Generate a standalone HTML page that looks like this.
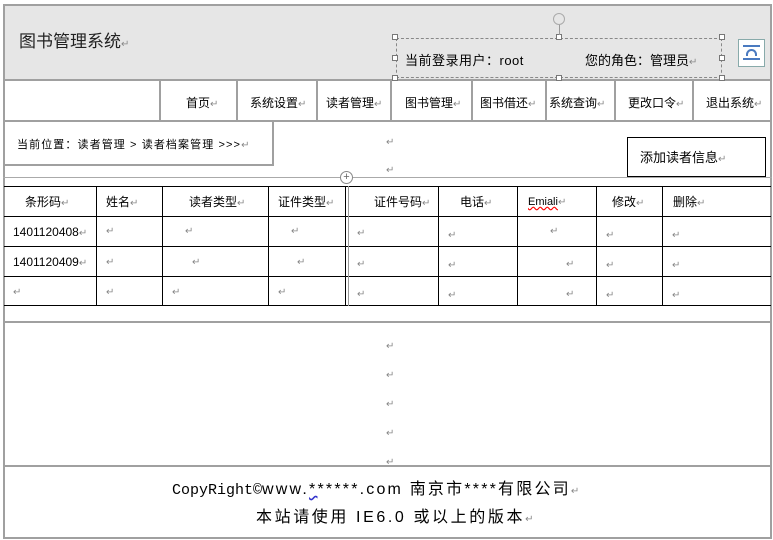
<!DOCTYPE html>
<html><head><meta charset="utf-8"><style>
body{margin:0;width:773px;height:540px;background:#fff;position:relative;overflow:hidden;font-family:"Liberation Sans","Noto Sans CJK SC",sans-serif;font-size:12px;color:#000}
div{position:absolute;box-sizing:border-box}
.g{border:2px solid #a0a0a0}
.k{border:1px solid #000}
.t{white-space:nowrap;line-height:14px}
.m{color:#888;font-size:10px}
.hl{height:2px;background:#a0a0a0}
.bl{height:1px;background:#000}
.vl{width:1px;background:#000}
</style></head><body>
<div class="g" style="left:3px;top:4px;width:769px;height:535px"></div>
<div style="left:5px;top:6px;width:765px;height:74px;background:#e6e6e6"></div>
<div class="hl" style="left:3px;top:79px;width:769px"></div>
<div class="t" style="left:19px;top:33px;font-size:17px;line-height:18px;color:#222">图书管理系统<span class="m">↵</span></div>
<div style="left:396px;top:38px;width:326px;height:40px;border:1px dashed #888"></div>
<div style="left:392px;top:34px;width:6px;height:6px;border:1px solid #777;background:#fff"></div>
<div style="left:556px;top:34px;width:6px;height:6px;border:1px solid #777;background:#fff"></div>
<div style="left:719px;top:34px;width:6px;height:6px;border:1px solid #777;background:#fff"></div>
<div style="left:392px;top:55px;width:6px;height:6px;border:1px solid #777;background:#fff"></div>
<div style="left:719px;top:55px;width:6px;height:6px;border:1px solid #777;background:#fff"></div>
<div style="left:392px;top:75px;width:6px;height:6px;border:1px solid #777;background:#fff"></div>
<div style="left:556px;top:75px;width:6px;height:6px;border:1px solid #777;background:#fff"></div>
<div style="left:719px;top:75px;width:6px;height:6px;border:1px solid #777;background:#fff"></div>
<div style="left:559px;top:24px;width:1px;height:11px;background:#999"></div>
<div style="left:553px;top:13px;width:12px;height:12px;border:1.5px solid #aaa;border-radius:50%"></div>
<div class="t" style="left:405px;top:54px;font-size:13px;letter-spacing:0.5px">当前登录用户：root</div>
<div class="t" style="left:585px;top:54px;font-size:13px">您的角色：管理员<span class="m">↵</span></div>
<div style="left:738px;top:39px;width:27px;height:28px;border:1px solid #8aa;background:#fff"></div>
<div style="left:743px;top:45px;width:17px;height:15px;border-top:2px solid #4a7ac0;border-bottom:2px solid #4a7ac0"></div>
<div style="left:746px;top:49px;width:11px;height:7px;border:2px solid #4a7ac0;border-bottom:none;border-radius:6px 6px 0 0"></div>
<div class="hl" style="left:3px;top:120px;width:769px"></div>
<div style="left:159px;top:80px;width:2px;height:41px;background:#a0a0a0"></div>
<div style="left:236px;top:80px;width:2px;height:41px;background:#a0a0a0"></div>
<div style="left:316px;top:80px;width:2px;height:41px;background:#a0a0a0"></div>
<div style="left:390px;top:80px;width:2px;height:41px;background:#a0a0a0"></div>
<div style="left:471px;top:80px;width:2px;height:41px;background:#a0a0a0"></div>
<div style="left:545px;top:80px;width:2px;height:41px;background:#a0a0a0"></div>
<div style="left:614px;top:80px;width:2px;height:41px;background:#a0a0a0"></div>
<div style="left:692px;top:80px;width:2px;height:41px;background:#a0a0a0"></div>
<div class="t" style="left:186px;top:96px">首页<span class="m">↵</span></div>
<div class="t" style="left:250px;top:96px">系统设置<span class="m">↵</span></div>
<div class="t" style="left:326px;top:96px">读者管理<span class="m">↵</span></div>
<div class="t" style="left:405px;top:96px">图书管理<span class="m">↵</span></div>
<div class="t" style="left:480px;top:96px">图书借还<span class="m">↵</span></div>
<div class="t" style="left:549px;top:96px">系统查询<span class="m">↵</span></div>
<div class="t" style="left:628px;top:96px">更改口令<span class="m">↵</span></div>
<div class="t" style="left:706px;top:96px">退出系统<span class="m">↵</span></div>
<div class="g" style="left:3px;top:120px;width:271px;height:46px;border-top:none"></div>
<div class="t" style="left:17px;top:138px;font-size:11px;letter-spacing:1.1px">当前位置：读者管理 &gt; 读者档案管理 &gt;&gt;&gt;<span class="m">↵</span></div>
<div class="t m" style="left:386px;top:136px">↵</div>
<div class="t m" style="left:386px;top:164px">↵</div>
<div class="k" style="left:627px;top:137px;width:139px;height:40px"></div>
<div class="t" style="left:640px;top:151px;font-size:13px">添加读者信息<span class="m">↵</span></div>
<div class="hl" style="left:3px;top:177px;width:769px;height:1px;background:#aaa"></div>
<div style="left:340px;top:171px;width:13px;height:13px;border:1px solid #888;border-radius:50%;background:#fff;font-size:11px;line-height:10px;text-align:center;color:#666">+</div>
<div class="bl" style="left:4px;top:186px;width:767px"></div>
<div class="bl" style="left:4px;top:216px;width:767px"></div>
<div class="bl" style="left:4px;top:246px;width:767px"></div>
<div class="bl" style="left:4px;top:276px;width:767px"></div>
<div class="bl" style="left:4px;top:305px;width:767px"></div>
<div class="vl" style="left:96px;top:186px;height:120px"></div>
<div class="vl" style="left:162px;top:186px;height:120px"></div>
<div class="vl" style="left:268px;top:186px;height:120px"></div>
<div class="vl" style="left:345px;top:186px;height:120px"></div>
<div class="vl" style="left:348px;top:186px;height:120px;background:#999"></div>
<div class="vl" style="left:438px;top:186px;height:120px"></div>
<div class="vl" style="left:517px;top:186px;height:120px"></div>
<div class="vl" style="left:596px;top:186px;height:120px"></div>
<div class="vl" style="left:662px;top:186px;height:120px"></div>
<div class="t" style="left:25px;top:195px">条形码<span class="m">↵</span></div>
<div class="t" style="left:106px;top:195px">姓名<span class="m">↵</span></div>
<div class="t" style="left:189px;top:195px">读者类型<span class="m">↵</span></div>
<div class="t" style="left:278px;top:195px">证件类型<span class="m">↵</span></div>
<div class="t" style="left:374px;top:195px">证件号码<span class="m">↵</span></div>
<div class="t" style="left:460px;top:195px">电话<span class="m">↵</span></div>
<div class="t" style="left:528px;top:195px;font-size:11px"><span style="text-decoration:underline wavy red">Emiali</span><span class="m">↵</span></div>
<div class="t" style="left:612px;top:195px">修改<span class="m">↵</span></div>
<div class="t" style="left:673px;top:195px">删除<span class="m">↵</span></div>
<div class="t" style="left:13px;top:225px">1401120408<span class="m">↵</span></div>
<div class="t" style="left:13px;top:255px">1401120409<span class="m">↵</span></div>
<div class="t m" style="left:13px;top:286px">↵</div>
<div class="t m" style="left:106px;top:225px">↵</div><div class="t m" style="left:106px;top:256px">↵</div><div class="t m" style="left:106px;top:286px">↵</div>
<div class="t m" style="left:185px;top:225px">↵</div><div class="t m" style="left:192px;top:256px">↵</div><div class="t m" style="left:172px;top:286px">↵</div>
<div class="t m" style="left:291px;top:225px">↵</div><div class="t m" style="left:297px;top:256px">↵</div><div class="t m" style="left:278px;top:286px">↵</div>
<div class="t m" style="left:357px;top:227px">↵</div><div class="t m" style="left:357px;top:258px">↵</div><div class="t m" style="left:357px;top:288px">↵</div>
<div class="t m" style="left:448px;top:229px">↵</div><div class="t m" style="left:448px;top:259px">↵</div><div class="t m" style="left:448px;top:289px">↵</div>
<div class="t m" style="left:550px;top:225px">↵</div><div class="t m" style="left:566px;top:258px">↵</div><div class="t m" style="left:566px;top:288px">↵</div>
<div class="t m" style="left:606px;top:229px">↵</div><div class="t m" style="left:606px;top:259px">↵</div><div class="t m" style="left:606px;top:289px">↵</div>
<div class="t m" style="left:672px;top:229px">↵</div><div class="t m" style="left:672px;top:259px">↵</div><div class="t m" style="left:672px;top:289px">↵</div>
<div class="hl" style="left:3px;top:321px;width:769px"></div>
<div class="t m" style="left:386px;top:340px">↵</div>
<div class="t m" style="left:386px;top:369px">↵</div>
<div class="t m" style="left:386px;top:398px">↵</div>
<div class="t m" style="left:386px;top:427px">↵</div>
<div class="t m" style="left:386px;top:456px">↵</div>
<div class="hl" style="left:3px;top:465px;width:769px"></div>
<div class="t" style="left:172px;top:481px;font-size:16px;line-height:18px;letter-spacing:2.2px"><span style="font-family:'Liberation Mono','Noto Sans CJK SC',monospace;font-size:15px;letter-spacing:0">CopyRight©</span>www.<span style="text-decoration:underline wavy #33c">*</span>*****.com 南京市****有限公司<span class="m">↵</span></div>
<div class="t" style="left:256px;top:509px;font-size:16px;line-height:18px;letter-spacing:2.6px">本站请使用 IE6.0 或以上的版本<span class="m">↵</span></div>
</body></html>
